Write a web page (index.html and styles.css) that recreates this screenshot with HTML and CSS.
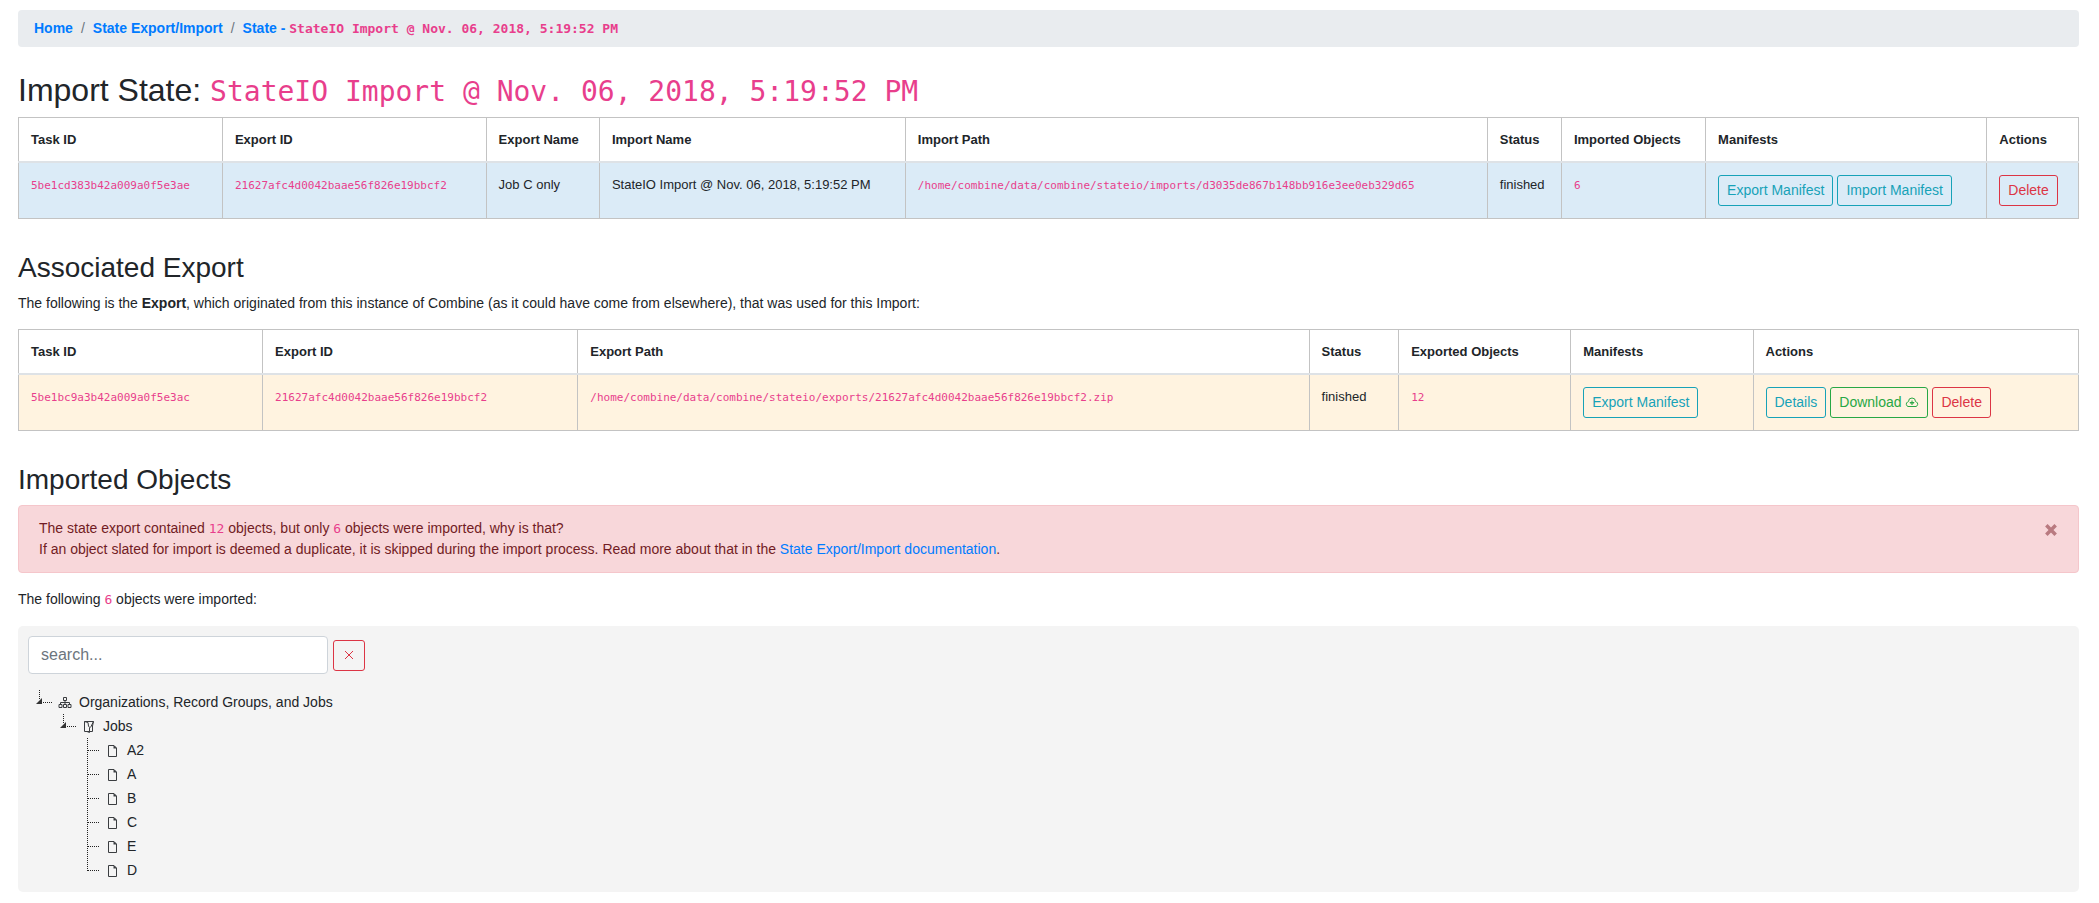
FILE: index.html
```html
<!DOCTYPE html>
<html lang="en">
<head>
<meta charset="utf-8">
<title>Import State</title>
<link rel="stylesheet" href="styles.css">
</head>
<body>
<svg class="sprite" aria-hidden="true">
  <symbol id="leaf" viewBox="0 0 24 24"><path class="dots" d="M11.500 0V24M12 12.500H24"/></symbol>
  <symbol id="leaf-last" viewBox="0 0 24 24"><path class="dots" d="M11.500 0V13M12 12.500H24"/></symbol>
  <symbol id="open" viewBox="0 0 24 24"><path class="dots" d="M11.500 0V9M15 12.500H24"/><path d="M8 14H14V8Z" fill="#333"/></symbol>
  <symbol id="file" viewBox="0 0 24 24"><path class="line" d="M7.500 7.500H13L15.500 10V18.500H7.500Z"/><path d="M12.500 7V10.500H16Z" fill="#3a3d40"/></symbol>
  <symbol id="folder" viewBox="0 0 24 24"><path class="line" d="M12 17.500H7.500V7.500H16.500L15.500 12V17.500H13M7.500 7.500L11 8.500L11.500 12L12.500 13.500V18.500L10 17.500M16.500 7.500L13.500 13.500"/></symbol>
  <symbol id="org" viewBox="0 0 24 24"><path class="line" d="M10.500 7.500H13.500V10.500H10.500ZM12 10.500V14M7.500 14V12.500H16.500V14M6 14.500H9V17.500H6ZM10.500 14.500H13.500V17.500H10.500ZM15 14.500H18V17.500H15Z"/></symbol>
</svg>
<main>
  <nav class="breadcrumb" aria-label="Breadcrumb">
    <a href="#">Home</a><span class="sep">/</span><a href="#">State Export/Import</a><span class="sep">/</span><a href="#">State - <code>StateIO Import @ Nov. 06, 2018, 5:19:52 PM</code></a>
  </nav>

  <h1>Import State: <code>StateIO Import @ Nov. 06, 2018, 5:19:52 PM</code></h1>
  <table class="import">
    <colgroup><col class="i-task"><col class="i-export"><col class="i-ename"><col class="i-iname"><col class="i-path"><col class="i-status"><col class="i-count"><col class="i-manifests"><col class="i-actions"></colgroup>
    <thead><tr><th>Task ID</th><th>Export ID</th><th>Export Name</th><th>Import Name</th><th>Import Path</th><th>Status</th><th>Imported Objects</th><th>Manifests</th><th>Actions</th></tr></thead>
    <tbody><tr>
      <td><code>5be1cd383b42a009a0f5e3ae</code></td>
      <td><code>21627afc4d0042baae56f826e19bbcf2</code></td>
      <td>Job C only</td>
      <td>StateIO Import @ Nov. 06, 2018, 5:19:52 PM</td>
      <td><code>/home/combine/data/combine/stateio/imports/d3035de867b148bb916e3ee0eb329d65</code></td>
      <td>finished</td>
      <td><code>6</code></td>
      <td><div class="buttons"><button class="btn info">Export Manifest</button><button class="btn info">Import Manifest</button></div></td>
      <td><div class="buttons"><button class="btn danger">Delete</button></div></td>
    </tr></tbody>
  </table>

  <h2>Associated Export</h2>
  <p>The following is the <strong>Export</strong>, which originated from this instance of Combine (as it could have come from elsewhere), that was used for this Import:</p>
  <table class="export">
    <colgroup><col class="e-task"><col class="e-export"><col class="e-path"><col class="e-status"><col class="e-count"><col class="e-manifests"><col class="e-actions"></colgroup>
    <thead><tr><th>Task ID</th><th>Export ID</th><th>Export Path</th><th>Status</th><th>Exported Objects</th><th>Manifests</th><th>Actions</th></tr></thead>
    <tbody><tr>
      <td><code>5be1bc9a3b42a009a0f5e3ac</code></td>
      <td><code>21627afc4d0042baae56f826e19bbcf2</code></td>
      <td><code>/home/combine/data/combine/stateio/exports/21627afc4d0042baae56f826e19bbcf2.zip</code></td>
      <td>finished</td>
      <td><code>12</code></td>
      <td><div class="buttons"><button class="btn info">Export Manifest</button></div></td>
      <td><div class="buttons"><button class="btn info">Details</button><button class="btn success">Download <svg class="cloud" viewBox="0 0 14 14" aria-hidden="true"><path d="M3 11.500A2.500 2.500 0 0 1 2.500 7L3.500 6.500A3.500 3.500 0 0 1 10.500 6.500L11.500 7A2.500 2.500 0 0 1 11 11.500ZM7 5.500V9.500M5 7.500H9L7 9.500Z"/></svg></button><button class="btn danger">Delete</button></div></td>
    </tr></tbody>
  </table>

  <h2>Imported Objects</h2>
  <div class="alert" role="alert">
    <div>The state export contained <code>12</code> objects, but only <code>6</code> objects were imported, why is that?<br>
    If an object slated for import is deemed a duplicate, it is skipped during the import process. Read more about that in the <a href="#">State Export/Import documentation</a>.</div>
    <button class="close" aria-label="Close"><svg viewBox="0 0 12 12" aria-hidden="true"><path d="M2 2L10 10M10 2L2 10"/></svg></button>
  </div>
  <p class="summary">The following <code>6</code> objects were imported:</p>

  <section class="panel">
    <div class="search">
      <input type="text" placeholder="search..." aria-label="Search">
      <button class="btn danger clear" aria-label="Clear search"><svg viewBox="0 0 10 10" aria-hidden="true"><path d="M1 1L9 9M9 1L1 9"/></svg></button>
    </div>
    <ul class="tree">
      <li><div class="node"><svg><use href="#open"/></svg><a href="#"><svg><use href="#org"/></svg>Organizations, Record Groups, and Jobs</a></div>
        <ul>
          <li><div class="node"><svg><use href="#open"/></svg><a href="#"><svg><use href="#folder"/></svg>Jobs</a></div>
            <ul>
              <li class="node"><svg><use href="#leaf"/></svg><a href="#"><svg><use href="#file"/></svg>A2</a></li>
              <li class="node"><svg><use href="#leaf"/></svg><a href="#"><svg><use href="#file"/></svg>A</a></li>
              <li class="node"><svg><use href="#leaf"/></svg><a href="#"><svg><use href="#file"/></svg>B</a></li>
              <li class="node"><svg><use href="#leaf"/></svg><a href="#"><svg><use href="#file"/></svg>C</a></li>
              <li class="node"><svg><use href="#leaf"/></svg><a href="#"><svg><use href="#file"/></svg>E</a></li>
              <li class="node"><svg><use href="#leaf-last"/></svg><a href="#"><svg><use href="#file"/></svg>D</a></li>
            </ul>
          </li>
        </ul>
      </li>
    </ul>
  </section>
</main>
</body>
</html>
```
FILE: styles.css
```css
* { box-sizing: border-box; }
body {
  margin: 0;
  padding: 10px 20px 12px 18px;
  background: #fff;
  color: #212529;
  font: 14px/21px "Liberation Sans", Arial, sans-serif;
}
a { color: #007bff; text-decoration: none; }
code { color: #e83e8c; font-family: "DejaVu Sans Mono", monospace; font-size: 13px; line-height: 1; }
.sprite { display: block; width: 0; height: 0; }
.dots { fill: none; stroke: #222; stroke-width: 1; stroke-dasharray: 1 1; }
.line { fill: none; stroke: #3a3d40; stroke-width: 1; }

.breadcrumb {
  display: flex;
  padding: 8px 16px;
  margin-bottom: 24px;
  border-radius: 4px;
  background: #e9ecef;
  font-weight: 700;
}
.sep { padding: 0 8px; color: #6c757d; font-weight: 400; }

h1, h2 { margin: 0 0 8px; font-weight: 400; }
h1 { font-size: 32px; line-height: 38px; }
h1 code { font-size: 28px; }
h2 { margin-top: 32px; font-size: 28px; line-height: 34px; }
p { margin: 0 0 15px; }

table { width: 100%; border-collapse: collapse; table-layout: fixed; font-size: 13px; line-height: 20px; }
th, td { padding: 12px; border: 1px solid #c3c3c3; text-align: left; vertical-align: top; white-space: nowrap; }
th { padding-bottom: 11px; border-bottom: 2px solid #dee2e6; }
td code { font-size: 11px; }
.import td { background: #dbebf7; }
.export td { background: #fff3e0; }
.i-task { width: 9.9%; }
.i-export { width: 12.8%; }
.i-ename { width: 5.5%; }
.i-iname { width: 14.85%; }
.i-path { width: 28.25%; }
.i-status { width: 3.6%; }
.i-count { width: 7%; }
.i-manifests { width: 13.65%; }
.i-actions { width: 4.45%; }
.e-task { width: 11.85%; }
.e-export { width: 15.3%; }
.e-path { width: 35.5%; }
.e-status { width: 4.35%; }
.e-count { width: 8.35%; }
.e-manifests { width: 8.85%; }
.e-actions { width: 15.8%; }

.buttons { display: flex; gap: 4px; }
.btn {
  padding: 4px 8px;
  border: 1px solid;
  border-radius: 3px;
  background: transparent;
  font: 14px/21px "Liberation Sans", Arial, sans-serif;
}
.info { color: #17a2b8; }
.success { color: #28a745; }
.danger { color: #dc3545; }
.btn svg { fill: none; stroke: currentColor; stroke-width: 1; }
.cloud { width: 14px; height: 14px; vertical-align: -2px; }

.alert {
  display: flex;
  justify-content: space-between;
  align-items: flex-start;
  padding: 12px 20px;
  margin-bottom: 16px;
  border: 1px solid #f5c6cb;
  border-radius: 4px;
  background: #f8d7da;
  color: #721c24;
}
.close { display: flex; padding: 5px 0; border: 0; background: none; }
.close svg { width: 14px; height: 14px; fill: none; stroke: #b97a80; stroke-width: 3; }
.summary { margin-bottom: 16px; }

.panel { padding: 10px; border-radius: 5px; background: #f4f4f4; }
.search { display: flex; align-items: center; gap: 5px; margin-bottom: 16px; }
.search input {
  width: 300px;
  height: 38px;
  padding: 6px 12px;
  border: 1px solid #ced4da;
  border-radius: 4px;
  background: #fff;
  color: #495057;
  font: 16px/24px "Liberation Sans", Arial, sans-serif;
}
.search input::placeholder { color: #6c757d; opacity: 1; }
.clear { display: flex; align-items: center; justify-content: center; width: 32px; height: 31px; }
.clear svg { flex: none; width: 10px; height: 10px; }

.tree, .tree ul { margin: 0; padding: 0; list-style: none; }
.tree ul { padding-left: 24px; }
.node { display: flex; height: 24px; line-height: 24px; }
.node svg { width: 24px; height: 24px; margin-right: 1px; }
.node a { display: flex; color: #212529; }
.node a svg { margin-right: 2px; }
```
